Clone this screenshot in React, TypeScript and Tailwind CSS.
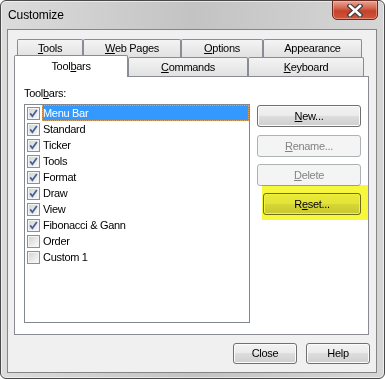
import React from "react";

const rows: [string, boolean][] = [
  ["Menu Bar", true],
  ["Standard", true],
  ["Ticker", true],
  ["Tools", true],
  ["Format", true],
  ["Draw", true],
  ["View", true],
  ["Fibonacci & Gann", true],
  ["Order", false],
  ["Custom 1", false],
];

function CheckBox({ checked }: { checked: boolean }) {
  return (
    <svg width="13" height="13" viewBox="0 0 13 13" className="shrink-0">
      <defs>
        <linearGradient id="cbg" x1="0" y1="0" x2="1" y2="1">
          <stop offset="0" stopColor="#d6d6d6" />
          <stop offset="1" stopColor="#f8f8f8" />
        </linearGradient>
      </defs>
      <rect x="0.5" y="0.5" width="12" height="12" fill="#f4f4f4" stroke="#8e8f8f" />
      <rect x="2" y="2" width="9" height="9" fill="url(#cbg)" />
      {checked && (
        <path d="M3.2 6.4 L5.4 9.2 L9.8 3" fill="none" stroke="#4b5f96" strokeWidth="1.8" />
      )}
    </svg>
  );
}

const btn =
  "flex items-center justify-center rounded-[3px] border border-[#707070] bg-[linear-gradient(#f2f2f2,#ebebeb_50%,#dddddd_50%,#cfcfcf)] shadow-[inset_0_0_0_1px_#fbfbfb] text-black";
const btnOff =
  "flex items-center justify-center rounded-[3px] border border-[#adb2b5] bg-[#f4f4f4] text-[#838383]";
const backTab =
  "flex h-[18px] items-center justify-center rounded-t-[2px] border border-b-0 border-[#898c95] bg-linear-to-b from-[#f4f4f4] to-[#e1e1e1]";
const frontTab =
  "flex h-[19px] items-center justify-center rounded-t-[2px] border border-b-0 border-[#898c95] bg-linear-to-b from-[#f4f4f4] to-[#e1e1e1]";

export default function App() {
  return (
    <div className="h-[379px] w-[385px] bg-white font-['Liberation_Sans',Arial,sans-serif] text-[11px] tracking-[-0.3px] text-black">
      <div className="flex h-[379px] w-[385px] flex-col rounded-[6px] border border-[#4a4a4a] bg-linear-to-r from-[#dcdcdc] via-[#c3c3c3] to-[#d6d6d6] shadow-[inset_0_0_0_1px_rgba(255,255,255,0.55)]">
        {/* Title bar */}
        <div className="flex h-[28px] items-start">
          <span className="pl-[7px] pt-[6px] text-[12px] leading-[16px] tracking-[-0.1px]">Customize</span>
          <div className="mr-[6px] ml-auto -mt-px flex h-[20px] w-[46px] items-center justify-center rounded-b-[5px] border border-[#6b2a20] bg-[linear-gradient(#e8a594,#d5654f_40%,#c5412b_55%,#cf5639)] shadow-[inset_0_0_0_1px_rgba(255,200,190,0.45)]">
            <svg width="16" height="13" viewBox="0 0 16 13">
              <path d="M3 2 L13 11 M13 2 L3 11" stroke="#3f3f3f" strokeWidth="5" strokeLinecap="square" />
              <path d="M3 2 L13 11 M13 2 L3 11" stroke="#ffffff" strokeWidth="2.6" strokeLinecap="square" />
            </svg>
          </div>
        </div>

        {/* Client area */}
        <div className="ml-[6px] mr-[7px] flex h-[344px] flex-col border border-[#858585] bg-[#f0f0f0]">
          <div className="pl-[6px] pt-[9px]">
            {/* back row of tabs */}
            <div className="flex pl-[3px]">
              <div className={`${backTab} w-[66px]`}>
                <span><u>T</u>ools</span>
              </div>
              <div className={`${backTab} w-[98px]`}>
                <span><u>W</u>eb Pages</span>
              </div>
              <div className={`${backTab} w-[82px]`}>
                <span><u>O</u>ptions</span>
              </div>
              <div className={`${backTab} w-[99px]`}>
                <span>Appearance</span>
              </div>
            </div>
            {/* front row of tabs */}
            <div className="relative z-10 flex h-[19px] items-end">
              <div className="-mb-px flex h-[22px] w-[114px] items-center justify-center rounded-t-[2px] border border-b-0 border-[#898c95] bg-white">
                <span>Tool<u>b</u>ars</span>
              </div>
              <div className={`${frontTab} w-[120px]`}>
                <span><u>C</u>ommands</span>
              </div>
              <div className={`${frontTab} w-[116px]`}>
                <span><u>K</u>eyboard</span>
              </div>
            </div>

            {/* panel */}
            <div className="relative h-[259px] w-[355px] border border-[#898c95] bg-white pl-[9px] pt-[9px]">
              <div className="h-[14px] leading-[14px]">
                Tool<u>b</u>ars:
              </div>
              <div className="mt-[4px] flex gap-[7px]">
                <div className="h-[219px] w-[226px] border border-[#828790] bg-white">
                  {rows.map(([label, checked], i) => (
                    <div key={label} className="flex h-[16px] items-center pl-[2px]">
                      <CheckBox checked={checked} />
                      <span
                        className={
                          i === 0
                            ? "ml-[2px] h-[16px] flex-1 border border-dotted border-[#e0a060] bg-[#3399ff] leading-[14px] text-white"
                            : "ml-[2px] h-[16px] flex-1 border border-transparent leading-[14px]"
                        }
                      >
                        {label}
                      </span>
                    </div>
                  ))}
                </div>
                <div className="flex flex-col pt-[1px]">
                  <div className={`${btn} h-[22px] w-[104px]`}>
                    <span><u>N</u>ew...</span>
                  </div>
                  <div className={`${btnOff} mt-[8px] h-[22px] w-[104px]`}>
                    <span><u>R</u>ename...</span>
                  </div>
                  <div className={`${btnOff} mt-[7px] h-[22px] w-[104px]`}>
                    <span><u>D</u>elete</span>
                  </div>
                  <div className="relative mt-[7px] ml-[6px] w-[98px]">
                    <div className={`${btn} h-[22px] w-[98px]`}>
                      <span>R<u>e</u>set...</span>
                    </div>
                    {/* highlighter mark */}
                    <div className="pointer-events-none absolute left-[-1px] top-[-8px] h-[35px] w-[106px] bg-[#f7f73c] mix-blend-multiply" />
                  </div>
                </div>
              </div>
            </div>
          </div>

          {/* bottom buttons */}
          <div className="mt-[8px] flex justify-end gap-[9px] pr-[6px]">
            <div className={`${btn} h-[21px] w-[64px]`}>Close</div>
            <div className={`${btn} h-[21px] w-[64px]`}>Help</div>
          </div>
        </div>
      </div>
    </div>
  );
}
